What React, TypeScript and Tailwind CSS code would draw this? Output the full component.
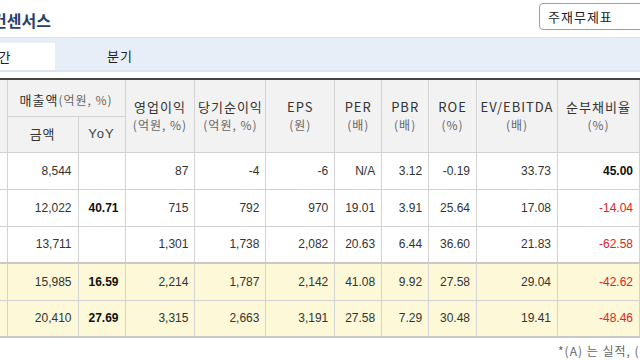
import React from 'react';

type Row = {
  amt: string;
  yoy: string;
  op: string;
  net: string;
  eps: string;
  per: string;
  pbr: string;
  roe: string;
  ev: string;
  debt: string;
  est?: boolean;
};

const rows: Row[] = [
  { amt: '8,544', yoy: '', op: '87', net: '-4', eps: '-6', per: 'N/A', pbr: '3.12', roe: '-0.19', ev: '33.73', debt: '45.00' },
  { amt: '12,022', yoy: '40.71', op: '715', net: '792', eps: '970', per: '19.01', pbr: '3.91', roe: '25.64', ev: '17.08', debt: '-14.04' },
  { amt: '13,711', yoy: '', op: '1,301', net: '1,738', eps: '2,082', per: '20.63', pbr: '6.44', roe: '36.60', ev: '21.83', debt: '-62.58' },
  { amt: '15,985', yoy: '16.59', op: '2,214', net: '1,787', eps: '2,142', per: '41.08', pbr: '9.92', roe: '27.58', ev: '29.04', debt: '-42.62', est: true },
  { amt: '20,410', yoy: '27.69', op: '3,315', net: '2,663', eps: '3,191', per: '27.58', pbr: '7.29', roe: '30.48', ev: '19.41', debt: '-48.46', est: true },
];

const kr = "font-['Noto_Sans_CJK_KR','Noto_Sans',sans-serif]";
const num = "font-['Liberation_Sans','Noto_Sans_CJK_KR',sans-serif]";

const HeadCell = ({ title, unit }: { title: string; unit: string }) => (
  <th rowSpan={2} className="border border-[#d3d3d3] bg-[#f2f2f2] font-normal align-middle">
    <div className="text-[13px] leading-[18px] tracking-[1px] text-[#333] whitespace-nowrap">{title}</div>
    <div className="text-[12px] leading-[18px] tracking-[1px] text-[#666] whitespace-nowrap">{unit}</div>
  </th>
);

const App = () => {
  return (
    <div className={`w-[640px] h-[360px] overflow-hidden bg-white ${kr}`}>
      {/* title + statement select */}
      <div className="flex items-start justify-between h-[37px]">
        <h3 className="ml-[-8px] mt-[9px] text-[16px] leading-[22px] font-bold text-[#2a3f6b] whitespace-nowrap">컨센서스</h3>
        <div className="shrink-0 mt-[3px] mr-[-12px] w-[113px] h-[27px] border border-[#a0a0a0] rounded-[4px] bg-white flex items-center pl-[8px] text-[13px] tracking-[1px] text-[#222]">
          주재무제표
        </div>
      </div>

      {/* period tabs */}
      <div className="flex h-[35px] bg-[#e8eef8] border-t border-[#dbe3ef] border-b-2 border-b-[#dce4f0]">
        <div className="shrink-0 ml-[-58px] mt-[5px] w-[113px] bg-white flex items-center justify-center text-[13px] tracking-[1px] text-[#222]">
          연간
        </div>
        <div className="shrink-0 w-[130px] flex items-center justify-center text-[13px] tracking-[1px] text-[#222] pt-[4px]">
          분기
        </div>
      </div>

      {/* consensus table */}
      <div className="mt-[6px] overflow-hidden">
        <table className="ml-[-73px] border-collapse table-fixed border-t-2 border-t-[#444] border-b-2 border-b-[#c8c8c8]">
          <colgroup>
            <col className="w-[80px]" />
            <col className="w-[71px]" />
            <col className="w-[47px]" />
            <col className="w-[70px]" />
            <col className="w-[71px]" />
            <col className="w-[69px]" />
            <col className="w-[47px]" />
            <col className="w-[47px]" />
            <col className="w-[48px]" />
            <col className="w-[81px]" />
            <col className="w-[82px]" />
          </colgroup>
          <thead>
            <tr className="h-[37px]">
              <th rowSpan={2} className="border border-[#d3d3d3] bg-[#f2f2f2]"></th>
              <th colSpan={2} className="border border-[#d3d3d3] bg-[#f2f2f2] font-normal whitespace-nowrap">
                <span className="text-[13px] tracking-[1px] text-[#333]">매출액</span>
                <span className="text-[12px] tracking-[1px] text-[#666]">(억원, %)</span>
              </th>
              <HeadCell title="영업이익" unit="(억원, %)" />
              <HeadCell title="당기순이익" unit="(억원, %)" />
              <HeadCell title="EPS" unit="(원)" />
              <HeadCell title="PER" unit="(배)" />
              <HeadCell title="PBR" unit="(배)" />
              <HeadCell title="ROE" unit="(%)" />
              <HeadCell title="EV/EBITDA" unit="(배)" />
              <HeadCell title="순부채비율" unit="(%)" />
            </tr>
            <tr className="h-[36px]">
              <th className="border border-[#d3d3d3] bg-[#f2f2f2] font-normal text-[13px] tracking-[1px] text-[#333]">금액</th>
              <th className={`border border-[#d3d3d3] bg-[#f2f2f2] font-normal text-[13px] tracking-[1px] text-[#444] ${num}`}>YoY</th>
            </tr>
          </thead>
          <tbody className={`${num} text-[12px] text-[#333]`}>
            {rows.map((r, i) => {
              const bg = r.est ? 'bg-[#fcf8d8]' : 'bg-white';
              const sep = i === 3 ? 'border-t-2 border-t-[#c8c8c8]' : '';
              const td = `border border-[#d3d3d3] text-right pr-[6px] ${bg} ${sep}`;
              return (
                <tr key={i} className="h-[37px]">
                  <td className={td}></td>
                  <td className={td}>{r.amt}</td>
                  <td className={`${td} font-bold text-[#111]`}>{r.yoy}</td>
                  <td className={td}>{r.op}</td>
                  <td className={td}>{r.net}</td>
                  <td className={td}>{r.eps}</td>
                  <td className={td}>{r.per}</td>
                  <td className={td}>{r.pbr}</td>
                  <td className={td}>{r.roe}</td>
                  <td className={td}>{r.ev}</td>
                  <td className={`${td} ${r.debt.startsWith('-') ? 'text-[#e02424]' : 'font-bold text-[#111]'}`}>{r.debt}</td>
                </tr>
              );
            })}
          </tbody>
        </table>
      </div>

      <div className="pl-[558px] pt-[4px] whitespace-nowrap text-[12px] tracking-[1px] text-[#666]">*(A) 는 실적, (E) 는 컨센서스</div>
    </div>
  );
};

export default App;
